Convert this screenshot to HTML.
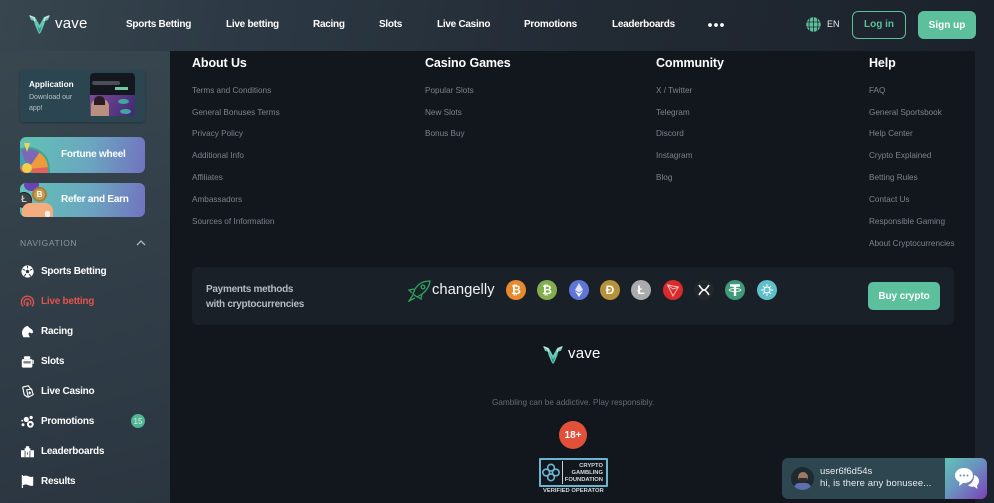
<!DOCTYPE html>
<html lang="en">
<head>
<meta charset="utf-8">
<title>vave</title>
<style>
*{box-sizing:border-box;margin:0;padding:0}
html,body{width:994px;height:503px;overflow:hidden;background:#1b222b;font-family:"Liberation Sans",Arial,sans-serif}
#root{position:relative;width:994px;height:503px;overflow:hidden;background:#1b222b}
.a{position:absolute;white-space:nowrap}
#hdr{left:0;top:0;width:994px;height:51px;background:linear-gradient(100deg,#37464f 0%,#2c3944 25%,#222a34 60%,#1b222b 100%)}
#side{left:0;top:51px;width:170px;height:452px;background:linear-gradient(165deg,#38474f 0%,#323f49 45%,#2a3540 100%)}
#main{left:170px;top:51px;width:805px;height:452px;background:#12171e}
.nav{top:18px;font-size:10px;font-weight:bold;color:#fff;line-height:14px;letter-spacing:-.27px}
.h{top:55px;font-size:12.5px;font-weight:bold;color:#fff;line-height:16px;letter-spacing:-.1px}
.l{font-size:8.2px;color:#7d838a;line-height:12px}
.m{left:41px;font-size:10px;font-weight:bold;color:#fff;line-height:14px;letter-spacing:-.25px}
.coin{top:280px;width:20px;height:20px;border-radius:50%;color:#fff;font-weight:bold;font-size:12px;line-height:20px;text-align:center}
.ic{left:21px;width:13px;height:13px;overflow:visible}
</style>
</head>
<body>
<div id="root">
<div id="hdr" class="a"></div>
<div id="side" class="a"></div>
<div id="main" class="a"></div>

<!-- header logo -->
<svg class="a" style="left:29px;top:14px" width="21" height="20" viewBox="0 0 21 20"><path d="M0 1l6 2 4.500 8L15 3l6-2-2 5-3 1-1 4-3 7-1.500 2L9 18 6 11 5 7 2 6z" fill="#69c7b4"/><path d="M8 11l2.500 4L13 11l-2 7h-1z" fill="#2a9488"/><path d="M1 2l4 2 1 3M20 2l-4 2-1 3" stroke="#d6e6e0" stroke-width="1.300" fill="none"/></svg>
<div class="a" style="left:55px;top:14px;font-size:15px;color:#fff;line-height:20px;letter-spacing:.2px">vave</div>

<div class="a nav" style="left:126px">Sports Betting</div>
<div class="a nav" style="left:226px">Live betting</div>
<div class="a nav" style="left:313px">Racing</div>
<div class="a nav" style="left:379px">Slots</div>
<div class="a nav" style="left:437px">Live Casino</div>
<div class="a nav" style="left:524px">Promotions</div>
<div class="a nav" style="left:612px">Leaderboards</div>
<svg class="a" style="left:707px;top:22px" width="18" height="6"><circle cx="3" cy="3" r="1.900" fill="#fff"/><circle cx="9" cy="3" r="1.900" fill="#fff"/><circle cx="15" cy="3" r="1.900" fill="#fff"/></svg>
<svg class="a" style="left:806px;top:17px" width="15" height="15" viewBox="0 0 15 15"><circle cx="7.500" cy="7.500" r="7.200" fill="#5cc09c"/><path d="M0 5h15M0 10h15M7.500 0v15M4 1q-2 6 0 13M11 1q2 6 0 13" stroke="#1f2a30" stroke-width=".8" fill="none"/></svg>
<div class="a" style="left:827px;top:18px;font-size:9px;color:#e8eaec;line-height:13px">EN</div>
<div class="a" style="left:852px;top:11px;width:54px;height:28px;border:1.500px solid #5cc09c;border-radius:6px;color:#5cc09c;font-size:10px;font-weight:bold;text-align:center;line-height:26px">Log in</div>
<div class="a" style="left:918px;top:11px;width:58px;height:28px;background:#5cc09c;border-radius:6px;color:#fff;font-size:10px;font-weight:bold;text-align:center;line-height:29px">Sign up</div>

<!-- sidebar promos -->
<div class="a" style="left:20px;top:70px;width:125px;height:52px;background:#2b4650;border-radius:4px;box-shadow:0 1px 2px #26313a"></div>
<div class="a" style="left:29px;top:79px;font-size:8.200px;font-weight:bold;color:#fff;line-height:12px">Application</div>
<div class="a" style="left:29px;top:92px;font-size:7px;color:#b5c0c4;line-height:11px;white-space:normal;width:50px">Download our app!</div>
<div class="a" style="left:90px;top:73px;width:45px;height:43px;border-radius:4px 4px 0 0;background:#14181e;overflow:hidden">
  <div class="a" style="left:2px;top:8px;width:28px;height:4px;border-radius:2px;background:#4a4f55"></div>
  <div class="a" style="left:25px;top:14px;width:13px;height:3px;background:#6ccaa3"></div>
  <div class="a" style="left:0;top:22px;width:45px;height:21px;background:linear-gradient(120deg,#7c4a9a,#3e2a72)"></div>
  <div class="a" style="left:1px;top:26px;width:18px;height:17px;border-radius:7px 7px 0 0;background:#b89080"></div>
  <div class="a" style="left:4px;top:23px;width:11px;height:9px;border-radius:5px 5px 0 0;background:#2a1c24"></div>
  <div class="a" style="left:28px;top:26px;width:11px;height:5px;border-radius:50%;background:#3fa8a0"></div>
  <div class="a" style="left:30px;top:36px;width:11px;height:5px;border-radius:50%;background:#3fa8a0"></div>
</div>

<div class="a" style="left:20px;top:137px;width:125px;height:36px;border-radius:6px;background:linear-gradient(100deg,#5fc4b4 0%,#6ba6c0 55%,#7273c0 100%);overflow:hidden">
  <svg class="a" style="left:0;top:0" width="40" height="36" viewBox="0 0 40 36">
    <circle cx="8" cy="32" r="22" fill="#3fa68f"/>
    <path d="M8 32L-11 25A20 20 0 0 1 1.200 13.200z" fill="#3f9fb5"/>
    <path d="M8 32L1.200 13.200A20 20 0 0 1 19.500 15.600z" fill="#7c68b5"/>
    <path d="M8 32L19.500 15.600A20 20 0 0 1 27.900 30.300z" fill="#ee9b3e"/>
    <path d="M8 32L27.900 30.300A20 20 0 0 1 23.300 44.900z" fill="#e2625b"/>
    <path d="M8 32L-11 25V48H8z" fill="#dc6a5c"/>
    <circle cx="7" cy="31" r="5" fill="#f2cf4a"/>
    <path d="M4 6h6l-3 9z" fill="#f0d460"/>
  </svg>
  <div class="a" style="left:41px;top:11px;font-size:10px;font-weight:bold;color:#fff;line-height:14px;letter-spacing:-.25px">Fortune wheel</div>
</div>
<div class="a" style="left:20px;top:183px;width:125px;height:34px;border-radius:6px;background:linear-gradient(100deg,#5fc4b4 0%,#6ba6c0 55%,#7273c0 100%);overflow:hidden">
  <div class="a" style="left:4px;top:-4px;width:15px;height:12px;border-radius:50%;background:#6a42b8"></div>
  <div class="a" style="left:-4px;top:9px;width:16px;height:16px;border-radius:50%;background:#3c4145;border:1.500px solid #1c2024;color:#ccc;font-size:9px;font-weight:bold;line-height:13px;text-align:center">Ł</div>
  <div class="a" style="left:12px;top:4px;width:15px;height:15px;border-radius:50%;background:#c79b52;border:2px solid #a67e38;color:#fff;font-size:8px;font-weight:bold;line-height:11px;text-align:center">B</div>
  <div class="a" style="left:2px;top:20px;width:31px;height:15px;border-radius:8px 8px 0 0;background:#f3ad7e"></div>
  <div class="a" style="left:25px;top:28px;width:5px;height:6px;border-radius:2px;background:#f6efe8"></div>
  <div class="a" style="left:41px;top:10px;font-size:10px;font-weight:bold;color:#fff;line-height:14px;letter-spacing:-.25px">Refer and Earn</div>
</div>

<div class="a" style="left:20px;top:237px;font-size:8.500px;color:#8b969d;letter-spacing:.6px;line-height:12px">NAVIGATION</div>
<svg class="a" style="left:136px;top:240px" width="10" height="6" viewBox="0 0 10 6"><path d="M1 5l4-4 4 4" stroke="#aeb6ba" stroke-width="1.300" fill="none"/></svg>

<!-- sidebar nav icons -->
<svg class="a ic" style="top:265px" viewBox="0 0 16 16"><circle cx="8" cy="8" r="7.500" fill="#fff"/><path d="M8 5.500l2.400 1.700-.9 2.800h-3l-.9-2.800z" fill="#2e3b45"/><path d="M8 1v3M2 5l3 1.500M14 5l-3 1.500M4 14l2-3M12 14l-2-3" stroke="#2e3b45" stroke-width="1.200"/></svg>
<svg class="a ic" style="top:295px" viewBox="0 0 16 16" fill="none" stroke="#e2534a" stroke-width="1.600"><path d="M2.500 14A7.500 7.500 0 1 1 13.500 14M5 12A4.200 4.200 0 1 1 11 12"/><path d="M8 8.500V14" stroke-width="2.600"/></svg>
<svg class="a ic" style="top:325px" viewBox="0 0 16 16"><path d="M8 1l2 2 4 3 1 3-2 1.500-3-1.500-1 2 2 4H3Q0 10 2 6t6-5z" fill="#fff"/></svg>
<svg class="a ic" style="top:355px" viewBox="0 0 16 16"><rect x="1" y="5" width="13" height="10.500" rx="1.500" fill="#fff"/><rect x="3.500" y="1.500" width="8" height="3.500" rx="1.500" fill="#fff"/><rect x="3" y="7.500" width="9" height="3" fill="#7b858c"/><path d="M15 6v5" stroke="#fff" stroke-width="1.300"/></svg>
<svg class="a ic" style="top:385px" viewBox="0 0 16 16" fill="none" stroke="#fff" stroke-width="1.400"><path d="M2 2.500l7-1.500 3 4M2 2.500L4 12l4 3"/><path d="M7 6l6-1 2 7-6 3z"/><path d="M10.500 7.500l2 2-1.500 2.500-2-2z" fill="#fff" stroke="none"/></svg>
<svg class="a ic" style="top:415px" viewBox="0 0 16 16"><circle cx="11.500" cy="11.500" r="4.200" fill="#fff"/><circle cx="11.500" cy="11.500" r="1.700" fill="#2e3b45"/><circle cx="6.500" cy="5.500" r="3.200" fill="#fff"/><circle cx="12.500" cy="3" r="2" fill="#fff"/><circle cx="2.500" cy="12" r="1.800" fill="#fff"/><circle cx="1.500" cy="7" r="1.100" fill="#fff"/></svg>
<svg class="a ic" style="top:445px" viewBox="0 0 16 16"><path d="M0 6.500h4.500V4H6V1.500h4V4h1.500v2.500H16V15H0z" fill="#fff"/><path d="M5 7v8M11 7v8" stroke="#2e3b45"/><path d="M7.500 9h1v3h-1z" fill="#2e3b45"/></svg>
<svg class="a ic" style="top:475px" viewBox="0 0 16 16"><path d="M1 0h1.500v1.500Q6 0 9 1.500t6 .5v11q-3 1-6-.5t-6.500 0V16H1z" fill="#fff"/></svg>

<div class="a m" style="top:265px">Sports Betting</div>
<div class="a m" style="top:295px;color:#e2534a">Live betting</div>
<div class="a m" style="top:325px">Racing</div>
<div class="a m" style="top:355px">Slots</div>
<div class="a m" style="top:385px">Live Casino</div>
<div class="a m" style="top:415px">Promotions</div>
<div class="a m" style="top:445px">Leaderboards</div>
<div class="a m" style="top:475px">Results</div>
<div class="a" style="left:131px;top:414px;width:14px;height:14px;border-radius:50%;background:#4fb592;color:#d8efe6;font-size:8px;text-align:center;line-height:15px">15</div>

<!-- footer columns -->
<div class="a h" style="left:192px">About Us</div>
<div class="a h" style="left:425px">Casino Games</div>
<div class="a h" style="left:656px">Community</div>
<div class="a h" style="left:869px">Help</div>

<div class="a l" style="left:192px;top:85px">Terms and Conditions</div>
<div class="a l" style="left:192px;top:107px">General Bonuses Terms</div>
<div class="a l" style="left:192px;top:128px">Privacy Policy</div>
<div class="a l" style="left:192px;top:150px">Additional Info</div>
<div class="a l" style="left:192px;top:172px">Affiliates</div>
<div class="a l" style="left:192px;top:194px">Ambassadors</div>
<div class="a l" style="left:192px;top:216px">Sources of Information</div>

<div class="a l" style="left:425px;top:85px">Popular Slots</div>
<div class="a l" style="left:425px;top:107px">New Slots</div>
<div class="a l" style="left:425px;top:128px">Bonus Buy</div>

<div class="a l" style="left:656px;top:85px">X / Twitter</div>
<div class="a l" style="left:656px;top:107px">Telegram</div>
<div class="a l" style="left:656px;top:128px">Discord</div>
<div class="a l" style="left:656px;top:150px">Instagram</div>
<div class="a l" style="left:656px;top:172px">Blog</div>

<div class="a l" style="left:869px;top:85px">FAQ</div>
<div class="a l" style="left:869px;top:107px">General Sportsbook</div>
<div class="a l" style="left:869px;top:128px">Help Center</div>
<div class="a l" style="left:869px;top:150px">Crypto Explained</div>
<div class="a l" style="left:869px;top:172px">Betting Rules</div>
<div class="a l" style="left:869px;top:194px">Contact Us</div>
<div class="a l" style="left:869px;top:216px">Responsible Gaming</div>
<div class="a l" style="left:869px;top:238px">About Cryptocurrencies</div>

<!-- payments -->
<div class="a" style="left:192px;top:267px;width:762px;height:58px;background:#1a2028;border-radius:6px"></div>
<div class="a" style="left:206px;top:283px;font-size:10px;font-weight:bold;color:#b5bbc0;line-height:14.500px;letter-spacing:-.28px">Payments methods<br>with cryptocurrencies</div>
<svg class="a" style="left:408px;top:280px" width="23" height="22" viewBox="0 0 23 22" fill="none" stroke="#2fa35f" stroke-width="1.300"><path d="M22 1q-10 0-15 8l-2 5 4 3 5-3q7-5 8-13z"/><path d="M6 9L1 10l3 3M14 14l-1 5-3-2M5 15l-4 6 6-3"/><circle cx="15" cy="7" r="1.800"/></svg>
<div class="a" style="left:432px;top:280px;font-size:14.800px;color:#f0f2f3;line-height:20px">changelly</div>

<div class="a coin" style="left:506px;background:#e58a2e">₿</div>
<div class="a coin" style="left:537px;background:#83ae4d">₿</div>
<svg class="a" style="left:569px;top:280px" width="20" height="20" viewBox="0 0 20 20"><circle cx="10" cy="10" r="10" fill="#5f76d8"/><path d="M10 3l4 7-4 2.500L6 10z" fill="#dfe5fa"/><path d="M10 13.500l4-2.500-4 6-4-6z" fill="#fff"/></svg>
<div class="a coin" style="left:600px;background:#b8923a">Ð</div>
<div class="a coin" style="left:631px;background:#a9abad">Ł</div>
<svg class="a" style="left:663px;top:280px" width="20" height="20" viewBox="0 0 20 20"><circle cx="10" cy="10" r="10" fill="#d92b2b"/><path d="M4.500 5l11 2-5.500 9zM4.500 5L10 16M10 9l5.500-2M4.500 5L10 9" stroke="#f3b9b9" stroke-width="1" fill="none"/></svg>
<svg class="a" style="left:694px;top:280px" width="20" height="20" viewBox="0 0 20 20"><circle cx="10" cy="10" r="10" fill="#22272c"/><path d="M5 5Q8 10 10 10T15 5M5 15Q8 10 10 10T15 15" stroke="#fff" stroke-width="1.600" fill="none"/></svg>
<svg class="a" style="left:725px;top:280px" width="20" height="20" viewBox="0 0 20 20"><circle cx="10" cy="10" r="10" fill="#3f9a79"/><path d="M5 5.500h10M10 5.500V16" stroke="#fff" stroke-width="2.400"/><ellipse cx="10" cy="10" rx="6" ry="1.500" fill="none" stroke="#fff" stroke-width=".8"/></svg>
<svg class="a" style="left:757px;top:280px" width="20" height="20" viewBox="0 0 20 20"><circle cx="10" cy="10" r="10" fill="#5fc0cc"/><circle cx="10" cy="10" r="3" fill="none" stroke="#fff" stroke-width="1.200"/><path d="M10 4v2M10 14v2M4 10h2M14 10h2M6 6l1.500 1.500M14 6l-1.500 1.500M6 14l1.500-1.500M14 14l-1.500-1.500" stroke="#fff" stroke-width="1"/></svg>

<div class="a" style="left:868px;top:282px;width:72px;height:28px;border-radius:5px;background:#5cc09c;color:#fff;font-size:10px;font-weight:bold;text-align:center;line-height:29px;letter-spacing:-.1px">Buy crypto</div>

<!-- footer logo -->
<svg class="a" style="left:543px;top:345px" width="20" height="19" viewBox="0 0 21 20"><path d="M0 1l6 2 4.500 8L15 3l6-2-2 5-3 1-1 4-3 7-1.500 2L9 18 6 11 5 7 2 6z" fill="#69c7b4"/><path d="M8 11l2.500 4L13 11l-2 7h-1z" fill="#2a9488"/><path d="M1 2l4 2 1 3M20 2l-4 2-1 3" stroke="#d6e6e0" stroke-width="1.300" fill="none"/></svg>
<div class="a" style="left:568px;top:344px;font-size:15px;color:#fff;line-height:20px;letter-spacing:.2px">vave</div>

<div class="a" style="left:492px;top:397px;font-size:8.200px;color:#666c73;line-height:12px">Gambling can be addictive. Play responsibly.</div>
<div class="a" style="left:559px;top:421px;width:28px;height:28px;border-radius:50%;background:#e2503a;color:#fff;font-size:10px;font-weight:bold;text-align:center;line-height:29px">18+</div>

<div class="a" style="left:539px;top:458px;width:69px;height:29px;border:2px solid #6cb4d0;border-radius:1px"></div>
<svg class="a" style="left:541px;top:462px" width="20" height="21" viewBox="0 0 25 25" fill="none" stroke="#6cb4d0" stroke-width="2"><circle cx="12.500" cy="6.500" r="4.200"/><circle cx="6.500" cy="12.500" r="4.200"/><circle cx="18.500" cy="12.500" r="4.200"/><circle cx="12.500" cy="18.500" r="4.200"/></svg>
<div class="a" style="left:562px;top:461px;width:1px;height:23px;background:#c8ced2"></div>
<div class="a" style="left:563px;top:463px;width:40px;text-align:right;font-size:5.800px;font-weight:bold;color:#d5d9dc;line-height:7px">CRYPTO<br>GAMBLING<br>FOUNDATION</div>
<div class="a" style="left:543px;top:488px;font-size:5.800px;font-weight:bold;color:#d5d9dc;line-height:7px">VERIFIED OPERATOR</div>

<!-- chat -->
<div class="a" style="left:782px;top:458px;width:205px;height:41px;border-radius:6px;background:#2d4650;overflow:hidden">
  <div class="a" style="left:163px;top:0;width:42px;height:41px;background:linear-gradient(135deg,#5fc4b4 0%,#6b8fc0 50%,#7d3fb8 100%)"></div>
  <svg class="a" style="left:173px;top:9px" width="24" height="24" viewBox="0 0 24 24"><path d="M9 1c5 0 9 3 9 7.500S14 16 9 16l-1 0-4 3 .6-4C2 14 0 11.500 0 8.500 0 4 4 1 9 1z" fill="#fff"/><path d="M19 8c3 1 5 3 5 6 0 2-1 3.500-2 4.500l.5 3.500-3.500-2.500c-2 .5-5 0-6-1.500 4-1 6.500-6 6-10z" fill="#fff"/><circle cx="5.500" cy="8.500" r="1" fill="#6b8fc0"/><circle cx="9" cy="8.500" r="1" fill="#6b8fc0"/><circle cx="12.500" cy="8.500" r="1" fill="#6b8fc0"/></svg>
  <div class="a" style="left:9px;top:9px;width:23px;height:23px;border-radius:50%;background:#1d2a30;overflow:hidden">
    <div class="a" style="left:7px;top:5px;width:10px;height:10px;border-radius:50%;background:#9a7a66"></div>
    <div class="a" style="left:8px;top:11px;width:8px;height:5px;border-radius:0 0 4px 4px;background:#2f2a2a"></div>
    <div class="a" style="left:3px;top:16px;width:17px;height:8px;border-radius:5px 5px 0 0;background:#5f6fae"></div>
  </div>
</div>
<div class="a" style="left:820px;top:466px;font-size:9.500px;color:#e8eced;line-height:12px">user6f6d54s</div>
<div class="a" style="left:820px;top:477px;font-size:9.500px;color:#e8eced;line-height:13px;letter-spacing:.1px">hi, is there any bonusee...</div>
</div>
</body>
</html>
